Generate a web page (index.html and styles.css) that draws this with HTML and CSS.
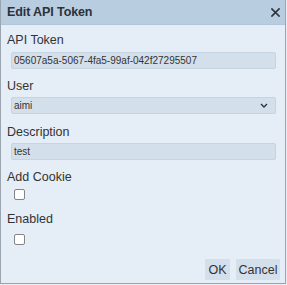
FILE: index.html
```html
<!DOCTYPE html>
<html>
<head>
<meta charset="utf-8">
<link rel="stylesheet" href="styles.css">
</head>
<body>
<div class="dialog">
  <div class="header">
    <span class="title">Edit API Token</span>
    <svg class="close" width="9" height="9" viewBox="0 0 9 9"><path d="M1 1L8 8M8 1L1 8" stroke="#2b3440" stroke-width="1.7" stroke-linecap="square"/></svg>
  </div>
  <div class="content">
    <div class="field f1">
      <div class="label">API Token</div>
      <div class="input">05607a5a-5067-4fa5-99af-042f27295507</div>
    </div>
    <div class="field f2">
      <div class="label">User</div>
      <div class="input select"><span>aimi</span>
        <svg class="chev" width="8" height="5" viewBox="0 0 8 5"><path d="M1 1L4 4L7 1" fill="none" stroke="#333" stroke-width="1.4"/></svg>
      </div>
    </div>
    <div class="field f3">
      <div class="label">Description</div>
      <div class="input">test</div>
    </div>
    <div class="field f4">
      <div class="label">Add Cookie</div>
      <div class="check"></div>
    </div>
    <div class="field f5">
      <div class="label">Enabled</div>
      <div class="check"></div>
    </div>
    <div class="buttons">
      <button class="btn ok">OK</button>
      <button class="btn cancel">Cancel</button>
    </div>
  </div>
</div>
</body>
</html>
```
FILE: styles.css
```css
html, body {
  margin: 0;
  padding: 0;
  background: #e9eef4;
  width: 287px;
  height: 285px;
  overflow: hidden;
}
.dialog {
  box-sizing: border-box;
  width: 286px;
  height: 284px;
  border: 1px solid #9aa5b0;
  border-top: none;
  background: #e5edf6;
  font-family: "Liberation Sans", Arial, sans-serif;
  color: #333;
  display: flex;
  flex-direction: column;
}
.header {
  height: 24px;
  background: #b9cde0;
  border-bottom: 1px solid #b2c6d9;
  display: flex;
  align-items: center;
  justify-content: space-between;
  padding: 0 5px 0 6px;
  flex: none;
}
.title {
  font-weight: bold;
  font-size: 12.5px;
  color: #2b3138;
  letter-spacing: -0.1px;
}
.close {
  margin-top: 1px;
}
.content {
  padding: 8px 9px 0 6px;
  display: flex;
  flex-direction: column;
}
.label {
  font-size: 12.5px;
  line-height: 14px;
  color: #333;
}
.input {
  box-sizing: border-box;
  margin-left: 4px;
  height: 17px;
  background: #d3e0ec;
  border: 1px solid #c4d4e3;
  border-radius: 2px;
  font-size: 10px;
  line-height: 15px;
  padding-left: 2px;
  color: #333;
}
.f1 .input { margin-top: 5px; }
.f2 { margin-top: 10px; }
.f2 .input { margin-top: 4px; }
.select {
  display: flex;
  justify-content: space-between;
  align-items: center;
  padding-right: 7px;
}
.f3 { margin-top: 11px; }
.f3 .input { margin-top: 4px; }
.f4 { margin-top: 10px; }
.f5 { margin-top: 12px; }
.check {
  box-sizing: border-box;
  width: 11px;
  height: 11px;
  margin-left: 7px;
  background: #fff;
  border: 1px solid #858585;
  border-radius: 2px;
}
.f4 .check { margin-top: 5px; }
.f5 .check { margin-top: 8px; }
.buttons {
  display: flex;
  justify-content: flex-end;
  gap: 6px;
  margin-top: 14px;
  margin-right: -4px;
}
.btn {
  height: 21px;
  border: none;
  background: #d3dfeb;
  font-family: "Liberation Sans", Arial, sans-serif;
  font-size: 12.5px;
  color: #333;
  padding: 0;
  border-radius: 1px;
}
.ok { width: 25px; }
.cancel { width: 44px; }
```
